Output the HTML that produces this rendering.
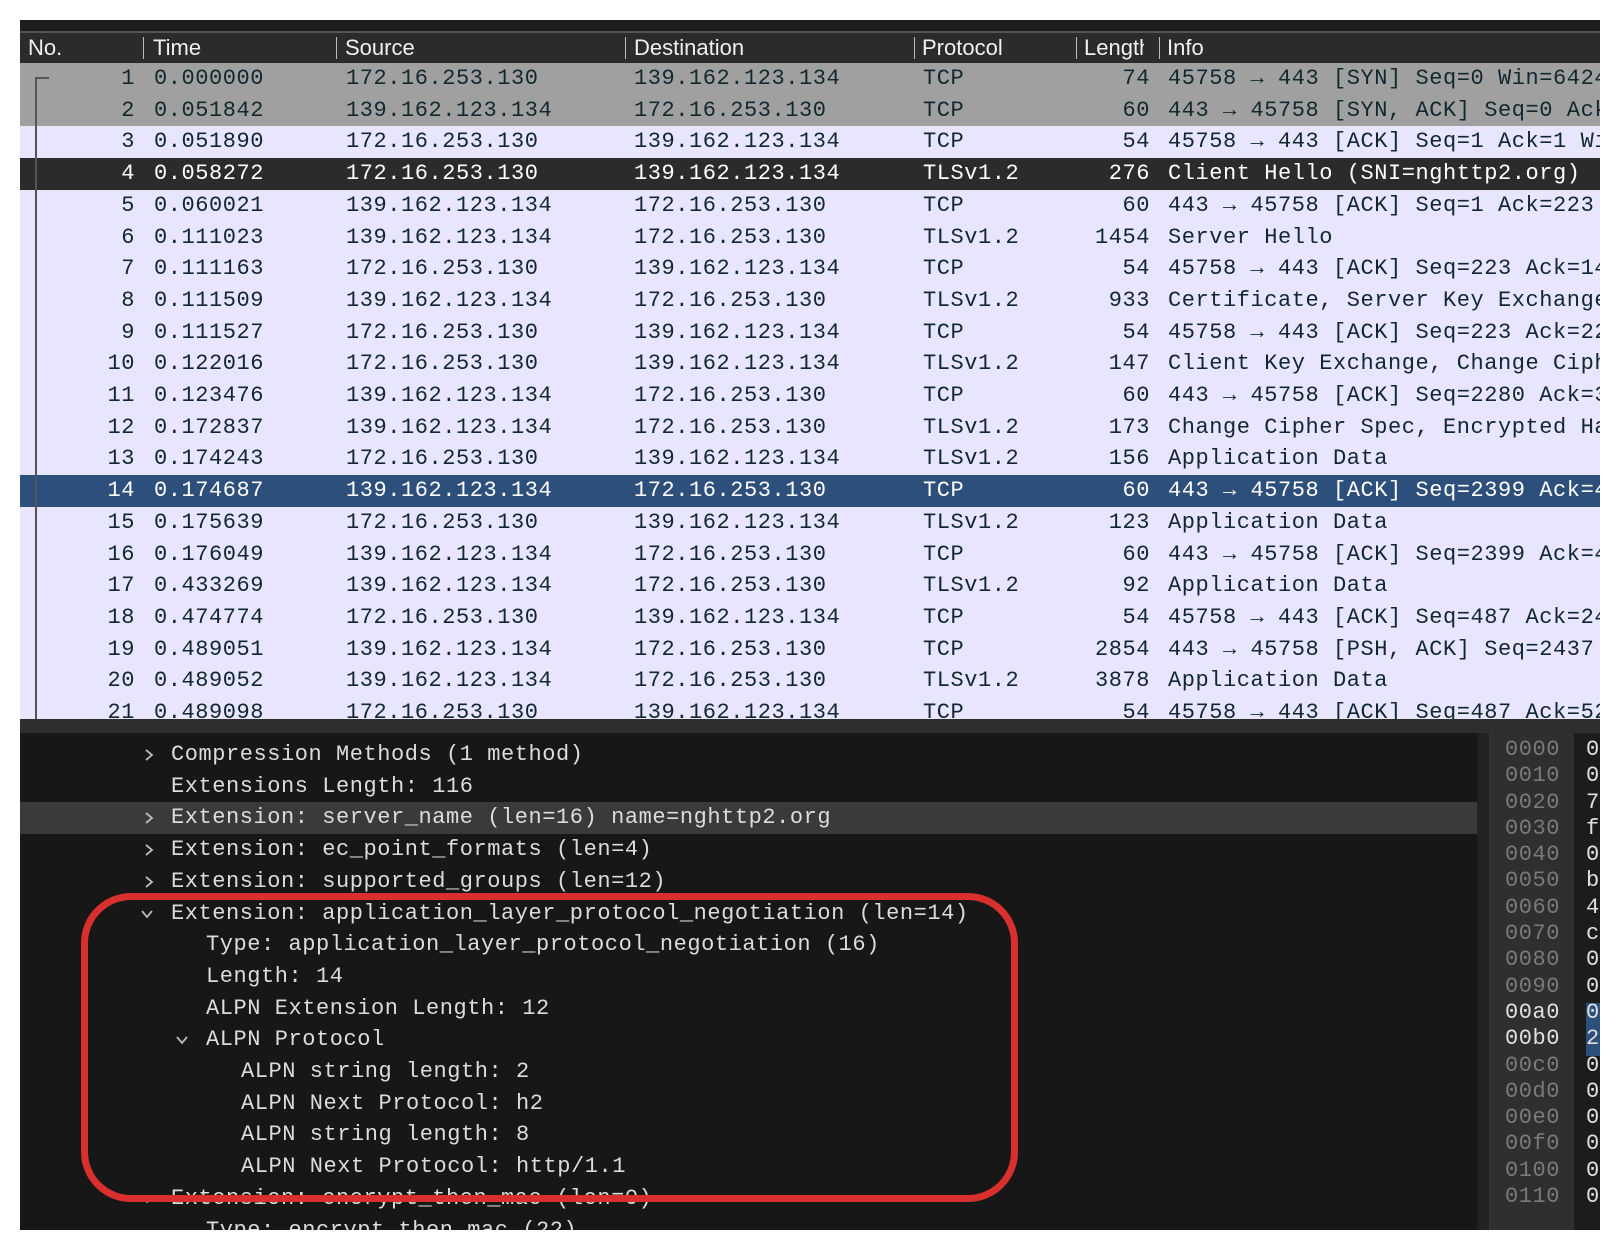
<!DOCTYPE html>
<html><head><meta charset="utf-8"><style>
*{margin:0;padding:0;box-sizing:border-box}
body{width:1620px;height:1250px;background:#fff;position:relative;overflow:hidden;font-family:"Liberation Mono",monospace}
.abs{position:absolute}
#top{left:20px;top:20px;width:1580px;height:13px;background:#1e1e1e;border-bottom:2px solid #555}
#hdr{left:20px;top:33px;width:1580px;height:30px;background:#2b2b2b;color:#f0f0f0;font-family:"Liberation Sans",sans-serif;font-size:22px;line-height:30px}
#hdr span{position:absolute;top:0}
#hdr i{position:absolute;top:4px;width:1px;height:22px;background:#bbb}
#list{left:20px;top:63px;width:1580px;height:656px;overflow:hidden;background:#e7e6fe}
.r{position:absolute;left:0;width:1580px;height:31.7px;font-size:22px;line-height:31.7px;letter-spacing:0.55px;color:#12272e;white-space:pre}
.r span{position:absolute;top:0}
.g{background:#a0a0a0}
.k{background:#2b2b2b;color:#fff}
.b{background:#2d4f7c;color:#fff}
.n{right:1465px;text-align:right}
.t{left:134px}.s{left:326px}.d{left:614px}.p{left:903px}
.l{right:450px;text-align:right}.i{left:1148px}
#tree{left:35px;top:77px;width:2px;height:642px;background:#555}
#tick{left:35px;top:77px;width:14px;height:2px;background:#555}
#sep{left:20px;top:719px;width:1580px;height:14px;background:#2e2e2e}
#det{left:20px;top:733px;width:1457px;height:497px;background:#171717;overflow:hidden}
.dl{position:absolute;left:0;width:1457px;height:31.7px;font-size:22px;line-height:31.7px;letter-spacing:0.55px;color:#dcdcdc;white-space:pre}
.dl.h{background:#3a3a3a}
.ar{position:absolute;top:10px;width:12px;height:12px}
#gut{left:1477px;top:733px;width:14px;height:497px;background:#222;border-right:2px solid #333}
#hex{left:1491px;top:733px;width:83px;height:497px;background:#2f2f2f}
#bytes{left:1574px;top:733px;width:26px;height:497px;background:#1c1c1c}
.hx{position:absolute;font-size:22px;line-height:26.3px;letter-spacing:0.55px;color:#7a7a7a}
.by{position:absolute;left:1586px;width:14px;font-size:22px;line-height:26.3px;color:#e0e0e0;overflow:hidden}
#red{left:81px;top:893px;width:937px;height:309px;border:7px solid #d9302e;border-radius:50px}
</style></head><body>
<div id="top" class="abs"></div>
<div id="hdr" class="abs">
<span style="left:8px">No.</span><i style="left:123px"></i>
<span style="left:133px">Time</span><i style="left:316px"></i>
<span style="left:325px">Source</span><i style="left:605px"></i>
<span style="left:614px">Destination</span><i style="left:894px"></i>
<span style="left:902px">Protocol</span><i style="left:1056px"></i>
<span style="left:1064px">Length</span>
<div style="position:absolute;left:1124px;top:0;width:15px;height:30px;background:#2b2b2b"></div>
<i style="left:1139px"></i>
<span style="left:1147px">Info</span>
</div>
<div id="list" class="abs">
<div class="r g" style="top:0"><span class="n">1</span><span class="t">0.000000</span><span class="s">172.16.253.130</span><span class="d">139.162.123.134</span><span class="p">TCP</span><span class="l">74</span><span class="i">45758 → 443 [SYN] Seq=0 Win=64240</span></div>
<div class="r g" style="top:31.7px"><span class="n">2</span><span class="t">0.051842</span><span class="s">139.162.123.134</span><span class="d">172.16.253.130</span><span class="p">TCP</span><span class="l">60</span><span class="i">443 → 45758 [SYN, ACK] Seq=0 Ack</span></div>
<div class="r" style="top:63.4px"><span class="n">3</span><span class="t">0.051890</span><span class="s">172.16.253.130</span><span class="d">139.162.123.134</span><span class="p">TCP</span><span class="l">54</span><span class="i">45758 → 443 [ACK] Seq=1 Ack=1 Wi</span></div>
<div class="r k" style="top:95.1px"><span class="n">4</span><span class="t">0.058272</span><span class="s">172.16.253.130</span><span class="d">139.162.123.134</span><span class="p">TLSv1.2</span><span class="l">276</span><span class="i">Client Hello (SNI=nghttp2.org)</span></div>
<div class="r" style="top:126.8px"><span class="n">5</span><span class="t">0.060021</span><span class="s">139.162.123.134</span><span class="d">172.16.253.130</span><span class="p">TCP</span><span class="l">60</span><span class="i">443 → 45758 [ACK] Seq=1 Ack=223</span></div>
<div class="r" style="top:158.5px"><span class="n">6</span><span class="t">0.111023</span><span class="s">139.162.123.134</span><span class="d">172.16.253.130</span><span class="p">TLSv1.2</span><span class="l">1454</span><span class="i">Server Hello</span></div>
<div class="r" style="top:190.2px"><span class="n">7</span><span class="t">0.111163</span><span class="s">172.16.253.130</span><span class="d">139.162.123.134</span><span class="p">TCP</span><span class="l">54</span><span class="i">45758 → 443 [ACK] Seq=223 Ack=14</span></div>
<div class="r" style="top:221.9px"><span class="n">8</span><span class="t">0.111509</span><span class="s">139.162.123.134</span><span class="d">172.16.253.130</span><span class="p">TLSv1.2</span><span class="l">933</span><span class="i">Certificate, Server Key Exchange</span></div>
<div class="r" style="top:253.6px"><span class="n">9</span><span class="t">0.111527</span><span class="s">172.16.253.130</span><span class="d">139.162.123.134</span><span class="p">TCP</span><span class="l">54</span><span class="i">45758 → 443 [ACK] Seq=223 Ack=22</span></div>
<div class="r" style="top:285.3px"><span class="n">10</span><span class="t">0.122016</span><span class="s">172.16.253.130</span><span class="d">139.162.123.134</span><span class="p">TLSv1.2</span><span class="l">147</span><span class="i">Client Key Exchange, Change Ciph</span></div>
<div class="r" style="top:317px"><span class="n">11</span><span class="t">0.123476</span><span class="s">139.162.123.134</span><span class="d">172.16.253.130</span><span class="p">TCP</span><span class="l">60</span><span class="i">443 → 45758 [ACK] Seq=2280 Ack=3</span></div>
<div class="r" style="top:348.7px"><span class="n">12</span><span class="t">0.172837</span><span class="s">139.162.123.134</span><span class="d">172.16.253.130</span><span class="p">TLSv1.2</span><span class="l">173</span><span class="i">Change Cipher Spec, Encrypted Ha</span></div>
<div class="r" style="top:380.4px"><span class="n">13</span><span class="t">0.174243</span><span class="s">172.16.253.130</span><span class="d">139.162.123.134</span><span class="p">TLSv1.2</span><span class="l">156</span><span class="i">Application Data</span></div>
<div class="r b" style="top:412.1px"><span class="n">14</span><span class="t">0.174687</span><span class="s">139.162.123.134</span><span class="d">172.16.253.130</span><span class="p">TCP</span><span class="l">60</span><span class="i">443 → 45758 [ACK] Seq=2399 Ack=4</span></div>
<div class="r" style="top:443.8px"><span class="n">15</span><span class="t">0.175639</span><span class="s">172.16.253.130</span><span class="d">139.162.123.134</span><span class="p">TLSv1.2</span><span class="l">123</span><span class="i">Application Data</span></div>
<div class="r" style="top:475.5px"><span class="n">16</span><span class="t">0.176049</span><span class="s">139.162.123.134</span><span class="d">172.16.253.130</span><span class="p">TCP</span><span class="l">60</span><span class="i">443 → 45758 [ACK] Seq=2399 Ack=4</span></div>
<div class="r" style="top:507.2px"><span class="n">17</span><span class="t">0.433269</span><span class="s">139.162.123.134</span><span class="d">172.16.253.130</span><span class="p">TLSv1.2</span><span class="l">92</span><span class="i">Application Data</span></div>
<div class="r" style="top:538.9px"><span class="n">18</span><span class="t">0.474774</span><span class="s">172.16.253.130</span><span class="d">139.162.123.134</span><span class="p">TCP</span><span class="l">54</span><span class="i">45758 → 443 [ACK] Seq=487 Ack=24</span></div>
<div class="r" style="top:570.6px"><span class="n">19</span><span class="t">0.489051</span><span class="s">139.162.123.134</span><span class="d">172.16.253.130</span><span class="p">TCP</span><span class="l">2854</span><span class="i">443 → 45758 [PSH, ACK] Seq=2437</span></div>
<div class="r" style="top:602.3px"><span class="n">20</span><span class="t">0.489052</span><span class="s">139.162.123.134</span><span class="d">172.16.253.130</span><span class="p">TLSv1.2</span><span class="l">3878</span><span class="i">Application Data</span></div>
<div class="r" style="top:634px"><span class="n">21</span><span class="t">0.489098</span><span class="s">172.16.253.130</span><span class="d">139.162.123.134</span><span class="p">TCP</span><span class="l">54</span><span class="i">45758 → 443 [ACK] Seq=487 Ack=52</span></div>
</div>
<div id="tree" class="abs"></div><div id="tick" class="abs"></div>
<div id="sep" class="abs"></div>
<div id="det" class="abs">
<div class="dl" style="top:6px"><svg class="ar" style="left:123px" viewBox="0 0 12 12"><path d="M3 1L9 6L3 11" fill="none" stroke="#bbb" stroke-width="1.8"/></svg><span style="position:absolute;left:151px">Compression Methods (1 method)</span></div>
<div class="dl" style="top:37.7px"><span style="position:absolute;left:151px">Extensions Length: 116</span></div>
<div class="dl h" style="top:69.4px"><svg class="ar" style="left:123px" viewBox="0 0 12 12"><path d="M3 1L9 6L3 11" fill="none" stroke="#bbb" stroke-width="1.8"/></svg><span style="position:absolute;left:151px">Extension: server_name (len=16) name=nghttp2.org</span></div>
<div class="dl" style="top:101.1px"><svg class="ar" style="left:123px" viewBox="0 0 12 12"><path d="M3 1L9 6L3 11" fill="none" stroke="#bbb" stroke-width="1.8"/></svg><span style="position:absolute;left:151px">Extension: ec_point_formats (len=4)</span></div>
<div class="dl" style="top:132.8px"><svg class="ar" style="left:123px" viewBox="0 0 12 12"><path d="M3 1L9 6L3 11" fill="none" stroke="#bbb" stroke-width="1.8"/></svg><span style="position:absolute;left:151px">Extension: supported_groups (len=12)</span></div>
<div class="dl" style="top:164.5px"><svg class="ar" style="left:121px" viewBox="0 0 12 12"><path d="M1 3L6 9L11 3" fill="none" stroke="#bbb" stroke-width="1.8"/></svg><span style="position:absolute;left:151px">Extension: application_layer_protocol_negotiation (len=14)</span></div>
<div class="dl" style="top:196.2px"><span style="position:absolute;left:186px">Type: application_layer_protocol_negotiation (16)</span></div>
<div class="dl" style="top:227.9px"><span style="position:absolute;left:186px">Length: 14</span></div>
<div class="dl" style="top:259.6px"><span style="position:absolute;left:186px">ALPN Extension Length: 12</span></div>
<div class="dl" style="top:291.3px"><svg class="ar" style="left:156px" viewBox="0 0 12 12"><path d="M1 3L6 9L11 3" fill="none" stroke="#bbb" stroke-width="1.8"/></svg><span style="position:absolute;left:186px">ALPN Protocol</span></div>
<div class="dl" style="top:323px"><span style="position:absolute;left:221px">ALPN string length: 2</span></div>
<div class="dl" style="top:354.7px"><span style="position:absolute;left:221px">ALPN Next Protocol: h2</span></div>
<div class="dl" style="top:386.4px"><span style="position:absolute;left:221px">ALPN string length: 8</span></div>
<div class="dl" style="top:418.1px"><span style="position:absolute;left:221px">ALPN Next Protocol: http/1.1</span></div>
<div class="dl" style="top:449.8px"><svg class="ar" style="left:121px" viewBox="0 0 12 12"><path d="M1 3L6 9L11 3" fill="none" stroke="#bbb" stroke-width="1.8"/></svg><span style="position:absolute;left:151px">Extension: encrypt_then_mac (len=0)</span></div>
<div class="dl" style="top:481.5px"><span style="position:absolute;left:186px">Type: encrypt_then_mac (22)</span></div>
</div>
<div id="gut" class="abs"></div>
<div id="hex" class="abs"></div>
<div id="bytes" class="abs"></div>
<div class="abs" style="left:1586px;top:1003px;width:14px;height:53px;background:#2d4f7c"></div>
<div class="hx" style="left:1505px;top:737px">0000<br>0010<br>0020<br>0030<br>0040<br>0050<br>0060<br>0070<br>0080<br>0090<br><span style="color:#e0e0e0">00a0<br>00b0</span><br>00c0<br>00d0<br>00e0<br>00f0<br>0100<br>0110</div>
<div class="by" style="top:737px">0<br>0<br>7<br>f<br>0<br>b<br>4<br>c<br>0<br>0<br>0<br>2<br>0<br>0<br>0<br>0<br>0<br>0</div>
<div id="red" class="abs"></div>
</body></html>
